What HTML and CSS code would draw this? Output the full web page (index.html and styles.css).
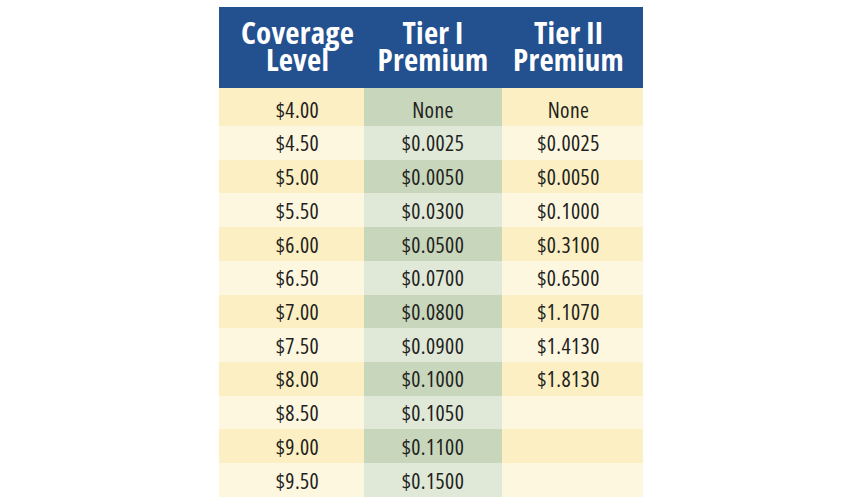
FILE: index.html
```html
<!DOCTYPE html>
<html lang="en">
<head>
<meta charset="utf-8">
<title>Coverage Level Premiums</title>
<link rel="stylesheet" href="styles.css">
</head>
<body>
<div class="page">
  <table class="rates">
    <colgroup>
      <col class="c1">
      <col class="c2">
      <col class="c3">
    </colgroup>
    <thead>
      <tr>
        <th class="col-a">Coverage<br>Level</th>
        <th class="col-b">Tier I<br>Premium</th>
        <th class="col-c">Tier II<br>Premium</th>
      </tr>
    </thead>
    <tbody>
      <tr class="dark first"><td class="col-a">$4.00</td><td class="col-b">None</td><td class="col-c">None</td></tr>
      <tr class="light"><td class="col-a">$4.50</td><td class="col-b">$0.0025</td><td class="col-c">$0.0025</td></tr>
      <tr class="dark"><td class="col-a">$5.00</td><td class="col-b">$0.0050</td><td class="col-c">$0.0050</td></tr>
      <tr class="light"><td class="col-a">$5.50</td><td class="col-b">$0.0300</td><td class="col-c">$0.1000</td></tr>
      <tr class="dark"><td class="col-a">$6.00</td><td class="col-b">$0.0500</td><td class="col-c">$0.3100</td></tr>
      <tr class="light"><td class="col-a">$6.50</td><td class="col-b">$0.0700</td><td class="col-c">$0.6500</td></tr>
      <tr class="dark"><td class="col-a">$7.00</td><td class="col-b">$0.0800</td><td class="col-c">$1.1070</td></tr>
      <tr class="light"><td class="col-a">$7.50</td><td class="col-b">$0.0900</td><td class="col-c">$1.4130</td></tr>
      <tr class="dark"><td class="col-a">$8.00</td><td class="col-b">$0.1000</td><td class="col-c">$1.8130</td></tr>
      <tr class="light"><td class="col-a">$8.50</td><td class="col-b">$0.1050</td><td class="col-c"></td></tr>
      <tr class="dark"><td class="col-a">$9.00</td><td class="col-b">$0.1100</td><td class="col-c"></td></tr>
      <tr class="light"><td class="col-a">$9.50</td><td class="col-b">$0.1500</td><td class="col-c"></td></tr>
    </tbody>
  </table>
</div>
</body>
</html>
```
FILE: styles.css
```css
html, body {
  margin: 0;
  padding: 0;
  background: #ffffff;
}

.page {
  padding: 7px 0 0 219px;
}

.rates {
  border-collapse: collapse;
  border-spacing: 0;
  table-layout: fixed;
  width: 424px;
  font-family: "Open Sans", "Roboto", sans-serif;
  font-stretch: 75%;
  color: #231f20;
}

.c1 { width: 145px; }
.c2 { width: 138px; }
.c3 { width: 141px; }

.rates th,
.rates td {
  padding: 0;
  text-align: center;
  vertical-align: middle;
  white-space: nowrap;
}

.rates thead th {
  background: #23508f;
  color: #ffffff;
  font-weight: 700;
  font-size: 31px;
  letter-spacing: 0.2px;
  line-height: 27.4px;
  height: 78.6px;
  padding-bottom: 2.4px;
}

.rates td {
  font-size: 21.5px;
  font-weight: 400;
  letter-spacing: 0.4px;
  line-height: normal;
  height: 33.73px;
}

.rates tr.first td {
  height: 33px;
  padding-top: 5px;
}

.rates th.col-a,
.rates td.col-a { padding-left: 12px; }
.rates th.col-c,
.rates td.col-c { padding-right: 8px; }

.dark td { background: #fcefc3; }
.dark td.col-b { background: #c8d6bc; }
.light td { background: #fef7e0; }
.light td.col-b { background: #e0e8d8; }
```
